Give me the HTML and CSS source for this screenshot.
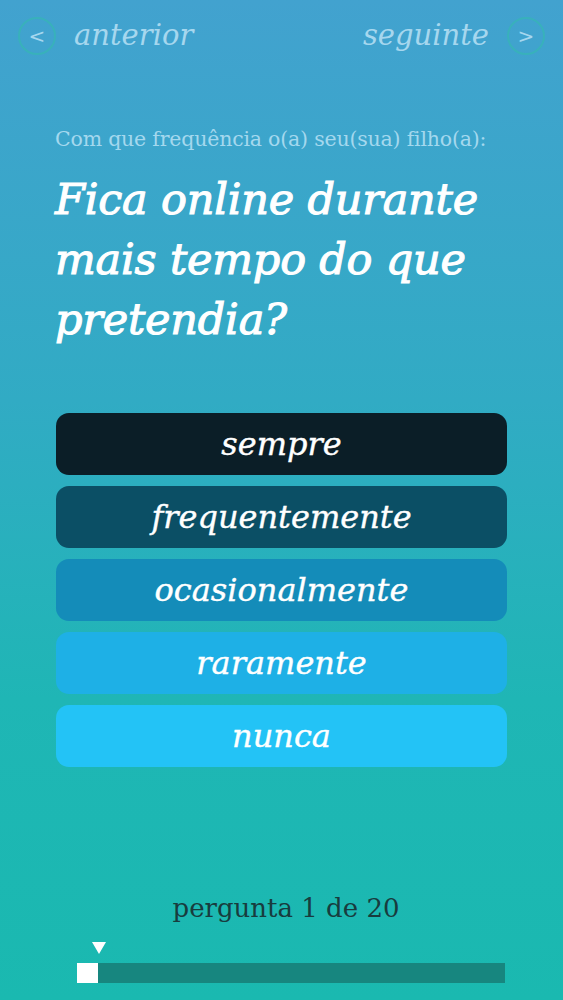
FILE: index.html
```html
<!DOCTYPE html>
<html lang="pt">
  <head>
    <meta charset="UTF-8" />
    <meta name="viewport" content="width=device-width, initial-scale=1.0" />
    <title>Questionário</title>
    <link rel="stylesheet" href="styles.css">
  </head>
  <body>
    <div class="screen">
      <!-- navegação -->
      <div class="nav">
        <a class="nav-link">
          <span class="circle">&lt;</span>
          <span class="nav-text">anterior</span>
        </a>
        <a class="nav-link">
          <span class="nav-text">seguinte</span>
          <span class="circle">&gt;</span>
        </a>
      </div>

      <div class="question">
        <p class="intro">Com que frequência o(a) seu(sua) filho(a):</p>
        <h1 class="title">Fica online durante mais tempo do que pretendia?</h1>
      </div>

      <div class="answers">
        <button class="answer a1">sempre</button>
        <button class="answer a2">frequentemente</button>
        <button class="answer a3">ocasionalmente</button>
        <button class="answer a4">raramente</button>
        <button class="answer a5">nunca</button>
      </div>

      <div class="footer">
        <div class="counter">pergunta 1 de 20</div>
        <div class="progress">
          <span class="marker"></span>
          <div class="track">
            <div class="fill" style="width: 5%"></div>
          </div>
        </div>
      </div>
    </div>
  </body>
</html>
```

FILE: styles.css
```css
html,
body {
  margin: 0;
  padding: 0;
}

body {
  font-family: "DejaVu Serif", "Liberation Serif", serif;
  color: white;
}

.screen {
  height: 1000px;
  display: flex;
  flex-direction: column;
  background: linear-gradient(180deg, #42a2cf 0%, #31abc4 40%, #1fb6b5 70%, #1ab9b0 100%);
  box-sizing: border-box;
}

.nav {
  display: flex;
  justify-content: space-between;
  align-items: center;
  padding: 15px 18px 0 18px;
  height: 42px;
}

.nav-link {
  display: flex;
  align-items: center;
  gap: 18px;
  color: #a6d7ee;
}

.circle {
  width: 38px;
  height: 38px;
  border: 2px solid #38b1bb;
  border-radius: 50%;
  display: flex;
  align-items: center;
  justify-content: center;
  font-family: "DejaVu Sans", sans-serif;
  font-size: 20px;
  color: #a6d7ee;
  box-sizing: border-box;
}

.nav-text {
  font-style: italic;
  font-size: 29px;
  margin-top: -3px;
}

.question {
  padding: 0 50px 0 55px;
  margin-top: 70px;
}

.intro {
  margin: 0;
  font-size: 20.5px;
  color: #a4d8ee;
  letter-spacing: -0.2px;
}

.title {
  margin: 18px 0 0 0;
  font-size: 43px;
  font-weight: normal;
  font-style: italic;
  line-height: 60px;
  letter-spacing: -0.2px;
  -webkit-text-stroke: 1.1px white;
}

.answers {
  display: flex;
  flex-direction: column;
  gap: 11px;
  padding: 0 56px;
  margin-top: 64px;
}

.answer {
  height: 62px;
  border: none;
  border-radius: 13px;
  color: white;
  font-family: "DejaVu Serif", serif;
  font-style: italic;
  font-size: 32px;
  padding: 0;
  -webkit-text-stroke: 0.4px white;
}

.a1 { background-color: #0b1e27; }
.a2 { background-color: #0b4f65; }
.a3 { background-color: #148cb9; }
.a4 { background-color: #1eb0e6; }
.a5 { background-color: #23c3f6; }

.footer {
  margin-top: auto;
  padding: 0 58px 17px 77px;
}

.counter {
  text-align: center;
  font-size: 26px;
  color: #183c3e;
  margin-left: -10px;
}

.progress {
  position: relative;
  margin-top: 40px;
}

.marker {
  position: absolute;
  left: 15px;
  top: -21px;
  width: 0;
  height: 0;
  border-left: 7px solid transparent;
  border-right: 7px solid transparent;
  border-top: 12px solid white;
}

.track {
  height: 20px;
  background-color: #17867f;
}

.fill {
  height: 100%;
  background-color: white;
}
```
